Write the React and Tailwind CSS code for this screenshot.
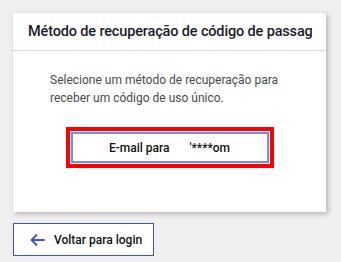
import React from "react";

export default function App() {
  return (
    <div className="min-h-[262px] w-[341px] bg-[#efefef] p-[13px]" style={{ fontFamily: "Roboto, 'Noto Sans', sans-serif" }}>
      <div className="w-[313px] bg-white shadow-[2px_2px_5px_rgba(0,0,0,0.25)]">
        <div className="h-[38px] border-b border-[#d9d9d9] pl-[15px] pr-[14px] flex items-center overflow-hidden">
          <div className="whitespace-nowrap overflow-hidden text-[14.5px] tracking-[-0.15px] font-medium text-[#1b1b2b]">
            Método de recuperação de código de passagem
          </div>
        </div>
        <div className="pt-[20px] pb-[44px]">
          <p className="pl-[37px] pr-[20px] text-[12px] leading-[18px] text-[#4a4a4a]">
            Selecione um método de recuperação para receber um código de uso único.
          </p>
          <div className="mt-[20px] flex justify-center">
            <div className="border-4 border-[#ff0000] p-px">
              <button className="w-[198px] h-[31px] border-2 border-[#8089e0] bg-white flex items-center justify-center whitespace-nowrap text-[12px] font-medium text-[#111]">
                <span>E-mail para</span>
                <span className="ml-[20px]">'****om</span>
              </button>
            </div>
          </div>
        </div>
      </div>
      <button className="mt-[11px] w-[141px] h-[33px] border border-[#3f51d6] bg-white flex items-center pl-[16px] gap-[9px] whitespace-nowrap text-[12px] font-medium text-[#111]">
        <svg width="15" height="12" viewBox="0 0 15 12" fill="none" stroke="#3b4fd8" strokeWidth="1.8" strokeLinecap="round" strokeLinejoin="round">
          <path d="M14 6H1.5M6.5 1L1.5 6l5 5" />
        </svg>
        <span>Voltar para login</span>
      </button>
    </div>
  );
}
